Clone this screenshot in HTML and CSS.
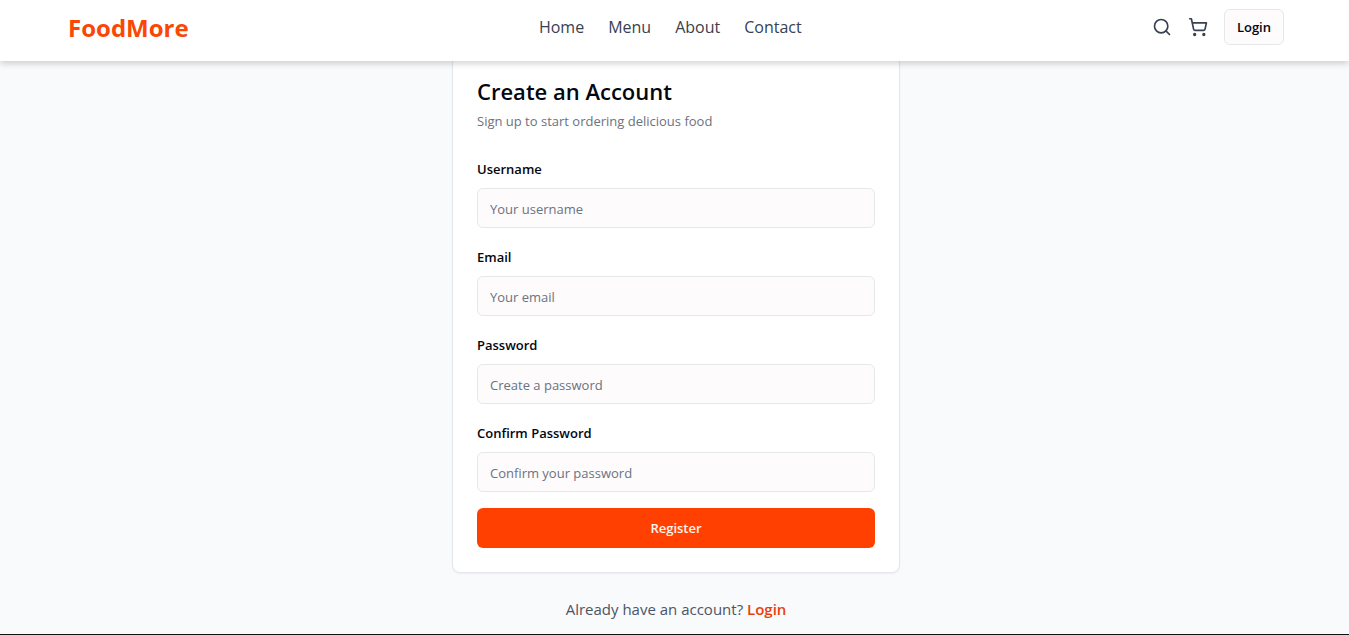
FILE: index.html
```html
<!DOCTYPE html>
<html lang="en">
<head>
<meta charset="utf-8">
<meta name="viewport" content="width=device-width, initial-scale=1">
<title>FoodMore</title>
<link rel="stylesheet" href="styles.css">
</head>
<body>
<header class="site-header">
  <a class="logo" href="#">FoodMore</a>
  <nav class="nav">
    <a href="#">Home</a>
    <a href="#">Menu</a>
    <a href="#">About</a>
    <a href="#">Contact</a>
  </nav>
  <div class="actions">
    <button class="icon-button" type="button" aria-label="Search">
      <svg class="icon" viewBox="0 0 24 24"><circle cx="11" cy="11" r="8"/><path d="m21 21-4.3-4.3"/></svg>
    </button>
    <button class="icon-button" type="button" aria-label="Cart">
      <svg class="icon" viewBox="0 0 24 24"><circle cx="8" cy="21" r="1"/><circle cx="19" cy="21" r="1"/><path d="M2.05 2.05h2l2.66 12.42a2 2 0 0 0 2 1.58h9.78a2 2 0 0 0 1.95-1.57l1.65-7.43H5.12"/></svg>
    </button>
    <button class="login-button" type="button">Login</button>
  </div>
</header>
<main class="page">
  <section class="card">
    <h1 class="title">Create an Account</h1>
    <p class="subtitle">Sign up to start ordering delicious food</p>
    <form class="form">
      <div class="field">
        <label for="username">Username</label>
        <input id="username" type="text" placeholder="Your username">
      </div>
      <div class="field">
        <label for="email">Email</label>
        <input id="email" type="email" placeholder="Your email">
      </div>
      <div class="field">
        <label for="password">Password</label>
        <input id="password" type="password" placeholder="Create a password">
      </div>
      <div class="field">
        <label for="confirm">Confirm Password</label>
        <input id="confirm" type="password" placeholder="Confirm your password">
      </div>
      <button class="submit" type="submit">Register</button>
    </form>
  </section>
  <p class="switch">Already have an account? <a href="#">Login</a></p>
</main>
<footer class="site-footer"></footer>
</body>
</html>
```
FILE: styles.css
```css
* {
  box-sizing: border-box;
}

body {
  margin: 0;
  min-height: 100vh;
  display: flex;
  flex-direction: column;
  background: #f9fafc;
  color: #030712;
  font-family: "Open Sans", "Noto Sans", sans-serif;
  font-size: 15px;
  line-height: 24px;
}

a {
  color: inherit;
  text-decoration: none;
}

button,
input {
  font: inherit;
}

.site-header {
  position: sticky;
  top: 0;
  z-index: 10;
  display: flex;
  align-items: center;
  justify-content: space-between;
  padding: 9px 65px 16px 68px;
  background: #fff;
  box-shadow: 0 3px 6px rgba(0, 0, 0, 0.16);
}

.logo {
  padding-top: 2px;
  color: #fa4706;
  font-size: 24px;
  font-weight: 700;
  line-height: 32px;
}

.nav {
  display: flex;
  gap: 24px;
  color: #374151;
  font-size: 16px;
  font-weight: 500;
}

.actions {
  display: flex;
  align-items: center;
  gap: 16px;
}

.icon-button {
  display: flex;
  padding: 0;
  border: 0;
  background: none;
  color: #374151;
}

.icon {
  width: 20px;
  height: 20px;
  fill: none;
  stroke: currentColor;
  stroke-width: 2;
  stroke-linecap: round;
  stroke-linejoin: round;
}

.login-button {
  padding: 7px 12px;
  border: 1px solid #e5e7eb;
  border-radius: 6px;
  background: #fdfbfc;
  color: #030712;
  font-size: 13px;
  font-weight: 600;
  line-height: 20px;
}

.page {
  flex: 1;
  padding: 0 16px 12px 19px;
}

.card {
  max-width: 448px;
  margin: -6px auto 0;
  padding: 24px;
  border: 1px solid #e5e7eb;
  border-radius: 8px;
  background: #fff;
  box-shadow: 0 1px 2px rgba(0, 0, 0, 0.05);
}

.title {
  margin: 0 0 8px;
  font-size: 22px;
  font-weight: 600;
  line-height: 22px;
}

.subtitle {
  margin: 0 0 24px;
  color: #6b7280;
  font-size: 13px;
  line-height: 22px;
}

.form {
  display: flex;
  flex-direction: column;
  gap: 16px;
}

.field {
  display: flex;
  flex-direction: column;
  gap: 6px;
  font-size: 13px;
}

.field label {
  font-weight: 600;
  line-height: 26px;
}

.field input {
  width: 100%;
  height: 40px;
  padding: 2px 12px 0;
  border: 1px solid #e5e7eb;
  border-radius: 6px;
  background: #fdfbfc;
}

.field input::placeholder {
  color: #6b7280;
  opacity: 1;
}

.submit {
  padding: 10px 16px;
  border: 0;
  border-radius: 6px;
  background: #ff4000;
  color: #fff5ee;
  font-size: 13px;
  font-weight: 600;
  line-height: 20px;
}

.switch {
  margin: 24px 0 0;
  color: #4b5563;
  text-align: center;
}

.switch a {
  color: #e8420a;
  font-weight: 600;
}

.site-footer {
  height: 1px;
  background: #111317;
}
```
